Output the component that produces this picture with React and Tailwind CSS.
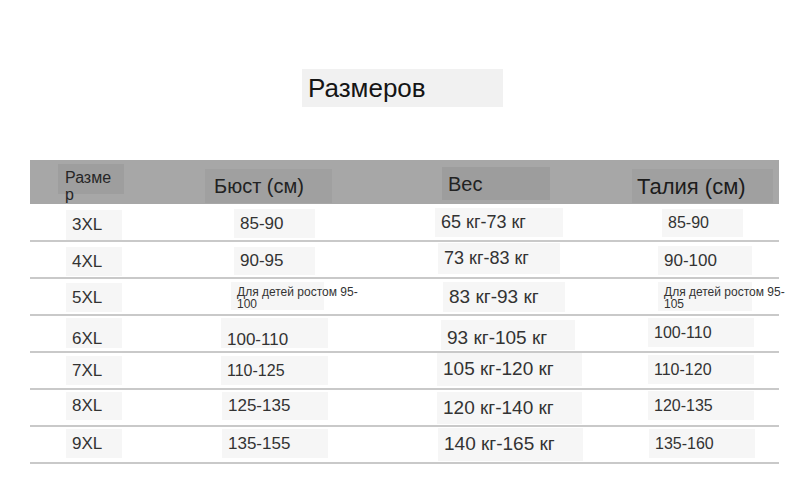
import React from 'react';

const rows = [
  {
    h: 'h-[38px]',
    cells: [
      { box: 'ml-[36px] mt-[6px] w-[56px] h-[30px]', text: 'text-[17px]', label: '3XL' },
      { box: 'ml-[34px] mt-[5px] w-[81px] h-[29px]', text: 'text-[17px]', label: '85-90' },
      { box: 'ml-[15px] mt-[4px] w-[128px] h-[29px]', text: 'text-[18px]', label: '65 кг-73 кг' },
      { box: 'ml-[42px] mt-[5px] w-[81px] h-[28px]', text: 'text-[16px]', label: '85-90' },
    ],
  },
  {
    h: 'h-[37px]',
    cells: [
      { box: 'ml-[36px] mt-[5px] w-[56px] h-[29px]', text: 'text-[17px]', label: '4XL' },
      { box: 'ml-[34px] mt-[5px] w-[81px] h-[28px]', text: 'text-[17px]', label: '90-95' },
      { box: 'ml-[18px] mt-[1px] w-[122px] h-[31px]', text: 'text-[18px]', label: '73 кг-83 кг' },
      { box: 'ml-[38px] mt-[4px] w-[94px] h-[29px]', text: 'text-[17px]', label: '90-100' },
    ],
  },
  {
    h: 'h-[37px]',
    cells: [
      { box: 'ml-[36px] mt-[4px] w-[56px] h-[29px]', text: 'text-[17px]', label: '5XL' },
      { box: 'ml-[31px] mt-[3px] w-[93px] h-[28px] pt-[3px]', text: 'text-[12px] leading-[12px]', small: ['Для детей ростом 95-', '100'] },
      { box: 'ml-[23px] mt-[3px] w-[122px] h-[30px]', text: 'text-[19px]', label: '83 кг-93 кг' },
      { box: 'ml-[38px] mt-[3px] w-[94px] h-[29px] pt-[3px]', text: 'text-[12px] leading-[12px]', small: ['Для детей ростом 95-', '105'] },
    ],
  },
  {
    h: 'h-[37px]',
    cells: [
      { box: 'ml-[36px] mt-[2px] w-[56px] h-[30px] pt-[12px]', text: 'text-[17px]', label: '6XL' },
      { box: 'ml-[21px] mt-[2px] w-[107px] h-[30px] pt-[14px]', text: 'text-[17px]', label: '100-110' },
      { box: 'ml-[21px] mt-[4px] w-[134px] h-[30px] pt-[6px]', text: 'text-[19px]', label: '93 кг-105 кг' },
      { box: 'ml-[28px] mt-[2px] w-[106px] h-[29px]', text: 'text-[16px]', label: '100-110' },
    ],
  },
  {
    h: 'h-[37px]',
    cells: [
      { box: 'ml-[36px] mt-[3px] w-[56px] h-[29px]', text: 'text-[17px]', label: '7XL' },
      { box: 'ml-[21px] mt-[3px] w-[107px] h-[29px]', text: 'text-[16px]', label: '110-125' },
      { box: 'ml-[17px] mt-0 w-[145px] h-[33px]', text: 'text-[19px]', label: '105 кг-120 кг' },
      { box: 'ml-[28px] mt-[2px] w-[106px] h-[29px]', text: 'text-[16px]', label: '110-120' },
    ],
  },
  {
    h: 'h-[37px]',
    cells: [
      { box: 'ml-[36px] mt-[2px] w-[56px] h-[28px]', text: 'text-[17px]', label: '8XL' },
      { box: 'ml-[22px] mt-[2px] w-[106px] h-[28px]', text: 'text-[17px]', label: '125-135' },
      { box: 'ml-[17px] mt-[2px] w-[145px] h-[32px]', text: 'text-[19px]', label: '120 кг-140 кг' },
      { box: 'ml-[28px] mt-[1px] w-[106px] h-[29px]', text: 'text-[16px]', label: '120-135' },
    ],
  },
  {
    h: 'h-[37px]',
    cells: [
      { box: 'ml-[36px] mt-[2px] w-[56px] h-[29px]', text: 'text-[17px]', label: '9XL' },
      { box: 'ml-[22px] mt-[2px] w-[106px] h-[29px]', text: 'text-[17px]', label: '135-155' },
      { box: 'ml-[18px] mt-[1px] w-[145px] h-[33px]', text: 'text-[19px]', label: '140 кг-165 кг' },
      { box: 'ml-[29px] mt-[2px] w-[106px] h-[29px]', text: 'text-[16px]', label: '135-160' },
    ],
  },
];

export default function App() {
  return (
    <div className="w-[799px] h-[484px] bg-white overflow-hidden font-['Liberation_Sans',Arial,sans-serif]">
      {/* title */}
      <div className="flex pt-[69px] pl-[302px]">
        <div className="w-[201px] h-[38px] bg-[#f1f1f1] flex items-center pl-[6px]">
          <span className="text-[26px] text-[#151515]">Размеров</span>
        </div>
      </div>

      <div className="ml-[30px] mt-[53px] w-[749px]">
        {/* header */}
        <div className="h-[44px] bg-[#a7a7a7] flex items-start">
          <div className="ml-[28px] mt-[4px] w-[66px] h-[30px] bg-[#9e9e9e] pl-[7px] pt-[5px]">
            <span className="block w-[52px] break-all text-[16px] leading-[17px] text-[#262626]">Размер</span>
          </div>
          <div className="ml-[81px] mt-[9px] w-[127px] h-[34px] bg-[#a0a0a0] flex items-center pl-[9px]">
            <span className="text-[20px] text-[#222]">Бюст (см)</span>
          </div>
          <div className="ml-[110px] mt-[7px] w-[108px] h-[33px] bg-[#9d9d9d] flex items-center pl-[6px]">
            <span className="text-[20px] text-[#222]">Вес</span>
          </div>
          <div className="ml-[82px] mt-[9px] w-[141px] h-[34px] bg-[#a0a0a0] flex items-center pl-[5px]">
            <span className="text-[22px] text-[#1c1c1c]">Талия (см)</span>
          </div>
        </div>

        {/* body */}
        {rows.map((row, i) => (
          <div
            key={i}
            className={`${row.h} grid grid-cols-[170px_220px_200px_159px] items-start border-b-2 border-[#c9c9c9]`}
          >
            {row.cells.map((c, j) => (
              <div key={j} className={`${c.box} bg-[#f6f6f6] flex items-center pl-[6px] whitespace-nowrap`}>
                {c.small ? (
                  <span className={`${c.text} text-[#333] block`}>
                    {c.small[0]}
                    <br />
                    {c.small[1]}
                  </span>
                ) : (
                  <span className={`${c.text} text-[#333]`}>{c.label}</span>
                )}
              </div>
            ))}
          </div>
        ))}
      </div>
    </div>
  );
}
